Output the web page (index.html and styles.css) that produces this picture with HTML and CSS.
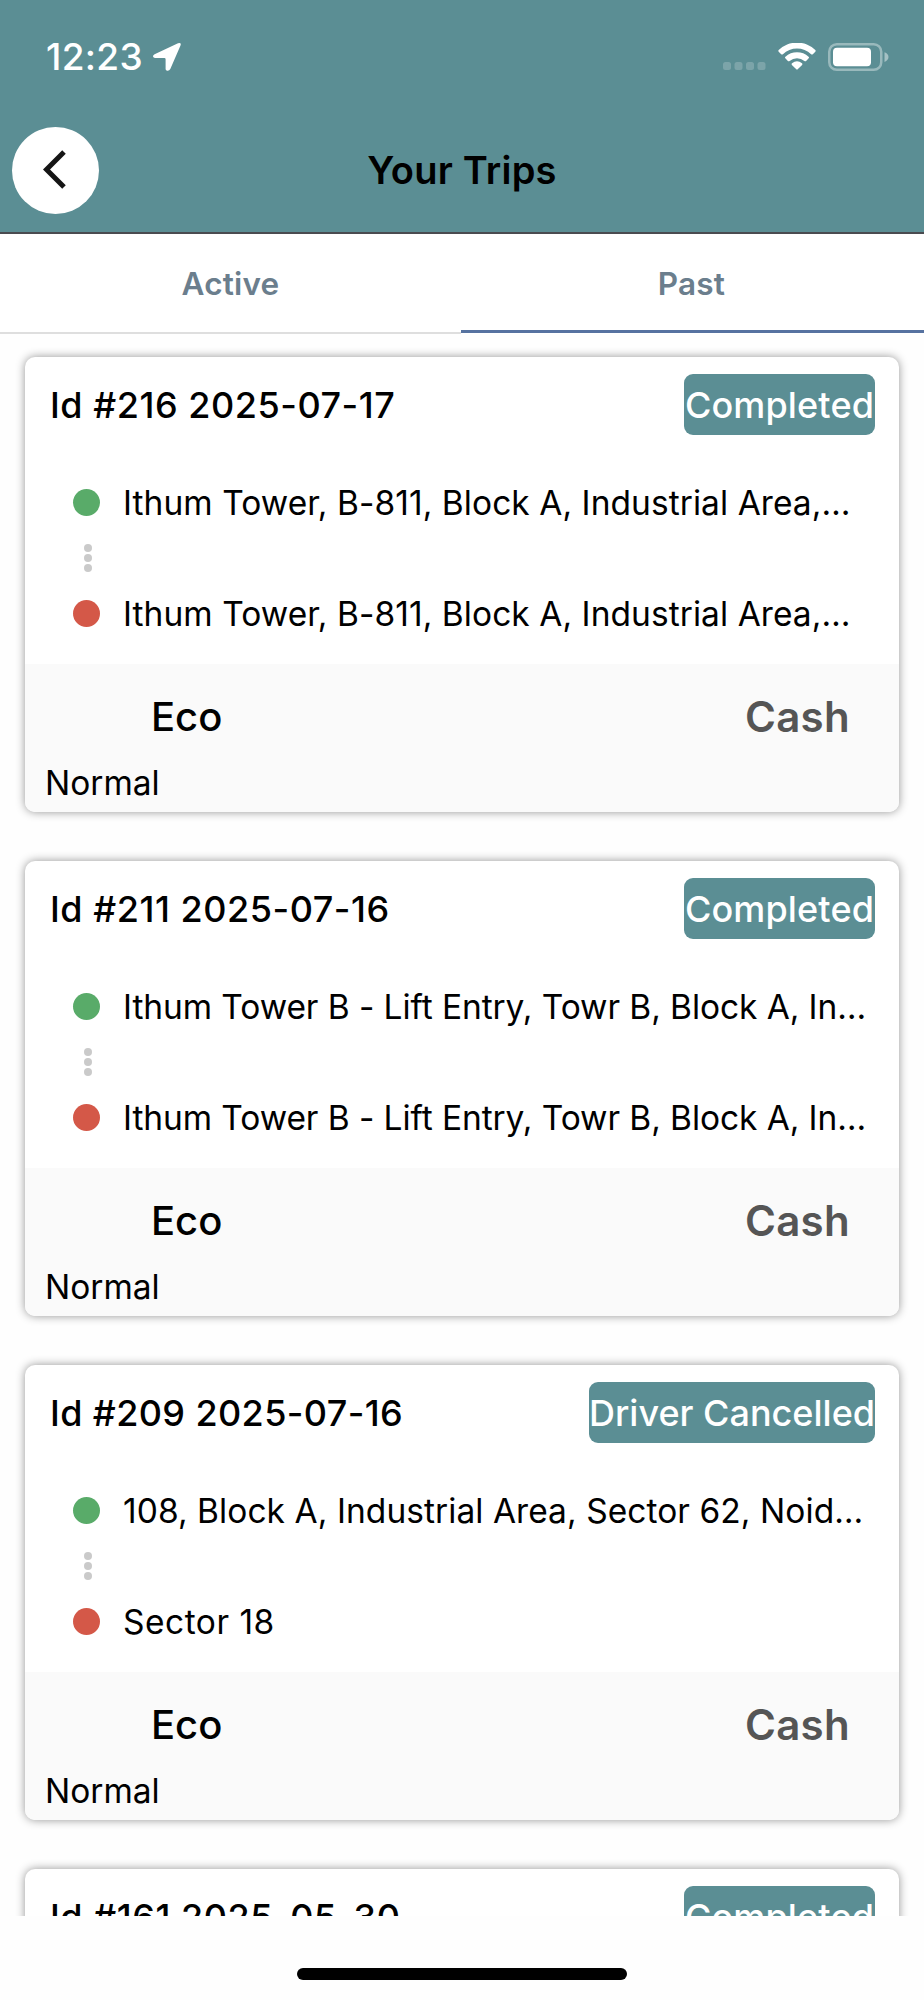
FILE: index.html
```html
<!DOCTYPE html>
<html lang="en">
<head>
<meta charset="utf-8">
<title>Your Trips</title>
<link rel="stylesheet" href="styles.css">
</head>
<body>
<div class="screen">
  <header class="header">
    <div class="status">
      <span class="time">12:23</span>
      <svg class="location" width="30" height="30" viewBox="0 0 30 30"><path d="M2.600 12.200 26 1.200Q29.700 0 28.500 3.600L18.300 27Q17 29.400 14.600 28.600Q13.700 28.200 13.600 27V17.200Q13.600 16 12.400 16H3Q1.400 15.800 1 14.400Q.9 12.900 2.600 12.200Z"/></svg>
      <svg class="signal" width="43" height="8" viewBox="0 0 43 8"><rect width="8" height="8" rx="2.500"/><rect x="11.500" width="8" height="8" rx="2.500"/><rect x="23" width="8" height="8" rx="2.500"/><rect x="34.500" width="8" height="8" rx="2.500"/></svg>
      <svg class="wifi" width="38" height="28" viewBox="0 0 38 28"><path d="M.7 8.700Q-.1 7.800.7 7A26.300 26.300 0 0 1 37.300 7Q38.100 7.800 37.300 8.700L34.800 11.200Q34 12 33.100 11.200A20.400 20.400 0 0 0 4.900 11.200Q4 12 3.200 11.200Z"/><path d="M7.300 15.300Q6.500 14.500 7.400 13.700A17.300 17.300 0 0 1 30.600 13.700Q31.500 14.500 30.700 15.300L28.100 17.900Q27.300 18.700 26.400 17.900A11.500 11.500 0 0 0 11.600 17.900Q10.700 18.700 9.900 17.900Z"/><path d="M13.900 21.900Q13.100 21.100 14 20.300A8 8 0 0 1 24 20.300Q24.900 21.100 24.100 21.900L19.700 26.300Q19 27 18.300 26.300Z"/></svg>
      <svg class="battery" width="61" height="28" viewBox="0 0 61 28"><rect class="shell" x="1.250" y="1.250" width="52" height="25.500" rx="7.500"/><rect class="charge" x="5" y="4.700" width="38" height="18.600" rx="4"/><path class="cap" d="M56.500 9.300Q60.500 10.800 60.500 14T56.500 18.900Z"/></svg>
    </div>
    <div class="nav">
      <div class="back"><svg width="24" height="42" viewBox="0 0 24 42"><path d="M21 3 3.500 20.500 21 38"/></svg></div>
      <h1 class="title">Your Trips</h1>
    </div>
  </header>
  <nav class="tabs">
    <div class="tab"><span>Active</span></div>
    <div class="tab selected"><span>Past</span></div>
  </nav>
  <main class="list">
    <article class="card">
      <div class="top"><span class="id">Id #216 2025-07-17</span><span class="badge">Completed</span></div>
      <div class="route">
        <i class="dot pickup"></i><p class="addr">Ithum Tower, B-811, Block A, Industrial Area,…</p>
        <div class="link"><i></i><i></i><i></i></div>
        <i class="dot drop"></i><p class="addr">Ithum Tower, B-811, Block A, Industrial Area,…</p>
      </div>
      <div class="bottom"><div class="fare"><span class="kind">Eco</span><span class="pay">Cash</span></div><span class="mode">Normal</span></div>
    </article>
    <article class="card">
      <div class="top"><span class="id">Id #211 2025-07-16</span><span class="badge">Completed</span></div>
      <div class="route">
        <i class="dot pickup"></i><p class="addr tight">Ithum Tower B - Lift Entry, Towr B, Block A, In…</p>
        <div class="link"><i></i><i></i><i></i></div>
        <i class="dot drop"></i><p class="addr tight">Ithum Tower B - Lift Entry, Towr B, Block A, In…</p>
      </div>
      <div class="bottom"><div class="fare"><span class="kind">Eco</span><span class="pay">Cash</span></div><span class="mode">Normal</span></div>
    </article>
    <article class="card">
      <div class="top"><span class="id snug">Id #209 2025-07-16</span><span class="badge wide">Driver Cancelled</span></div>
      <div class="route">
        <i class="dot pickup"></i><p class="addr">108, Block A, Industrial Area, Sector 62, Noid…</p>
        <div class="link"><i></i><i></i><i></i></div>
        <i class="dot drop"></i><p class="addr loose">Sector 18</p>
      </div>
      <div class="bottom"><div class="fare"><span class="kind">Eco</span><span class="pay">Cash</span></div><span class="mode">Normal</span></div>
    </article>
    <article class="card">
      <div class="top"><span class="id">Id #161 2025-05-30</span><span class="badge">Completed</span></div>
    </article>
  </main>
  <footer class="home"><div class="bar"></div></footer>
</div>
</body>
</html>
```
FILE: styles.css
```css
* { box-sizing: border-box; }
body { margin: 0; background: #fefefe; font-family: Inter, sans-serif; color: #000; }
svg { display: block; }
.screen { width: 924px; height: 2000px; display: flex; flex-direction: column; overflow: hidden; }

.header { height: 234px; flex: none; background: #5b8e94; border-bottom: 2px solid #4a4b50; }
.status { height: 114px; display: flex; align-items: center; padding: 0 35px 0 46px; fill: #fff; }
.time { color: #fff; font-size: 37px; font-weight: 550; letter-spacing: .3px; line-height: 40px; width: 106px; white-space: nowrap; }
.location { margin-right: auto; }
.signal { margin: 18px 12px 0 0; opacity: .2; }
.wifi { margin-right: 12px; }
.shell { fill: none; stroke: #fff; stroke-width: 2.5; opacity: .38; }
.cap { opacity: .45; }

.nav { height: 112px; display: grid; grid-template-columns: 87px 1fr 87px; align-items: center; padding: 0 12px; }
.back { width: 87px; height: 87px; border-radius: 50%; background: #fff; display: flex; align-items: center; padding-left: 31px; }
.back path { fill: none; stroke: #151515; stroke-width: 5; }
.title { margin: 0; text-align: center; font-size: 38px; font-weight: 570; letter-spacing: .2px; line-height: 46px; }

.tabs { height: 100px; flex: none; display: flex; background: #fff; }
.tab { width: 461px; padding-top: 30px; text-align: center; font-size: 31.500px; font-weight: 570; letter-spacing: .2px; line-height: 40px; color: #6b7e8d; border-bottom: 2px solid #dedede; }
.selected { width: 463px; height: 99px; padding-right: 2px; border-bottom: 3px solid #5672a0; }

.list { height: 1582px; flex: none; overflow: hidden; padding: 23px 25px 0; display: flex; flex-direction: column; gap: 49px; }
.card { height: 455px; flex: none; background: #fff; border-radius: 10px; box-shadow: 0 0 10px rgba(0, 0, 0, .42); overflow: hidden; display: flex; flex-direction: column; }
.top { height: 95px; display: flex; justify-content: space-between; align-items: center; padding: 0 24px 0 25px; font-size: 36px; font-weight: 500; white-space: nowrap; }
.id { letter-spacing: .53px; }
.snug { letter-spacing: .38px; }
.badge { width: 191px; height: 61px; border-radius: 9px; background: #5b8e94; color: #fff; line-height: 63px; letter-spacing: .15px; display: flex; justify-content: center; }
.wide { width: 286px; letter-spacing: 0; }
.route { height: 212px; padding: 29px 20px 0 48px; display: grid; grid-template-columns: 50px 1fr; grid-template-rows: 44px 67px 44px; align-items: center; }
.dot { width: 27px; height: 27px; border-radius: 50%; margin-top: -1px; }
.pickup { background: #59ab69; }
.drop { background: #d45848; }
.addr { margin: 0; font-size: 33.500px; line-height: 44px; letter-spacing: .06px; white-space: nowrap; }
.tight { letter-spacing: -.08px; }
.loose { letter-spacing: .5px; }
.link { grid-column: 1 / 3; padding: 0 0 2px 11px; display: flex; flex-direction: column; gap: 2px; }
.link i { width: 8px; height: 8px; border-radius: 50%; background: #cacaca; }
.bottom { flex: 1; background: #fafafa; padding: 28px 49px 0 20px; }
.fare { display: flex; justify-content: space-between; align-items: center; height: 48px; padding-left: 106px; }
.kind { font-size: 40px; font-weight: 500; }
.pay { font-size: 42px; font-weight: 570; letter-spacing: .3px; color: #555; }
.mode { display: block; margin-top: 21px; font-size: 33.500px; line-height: 44px; }

.home { flex: 1; display: flex; justify-content: center; padding-top: 52px; }
.bar { width: 330px; height: 12px; border-radius: 6px; background: #000; }
```
